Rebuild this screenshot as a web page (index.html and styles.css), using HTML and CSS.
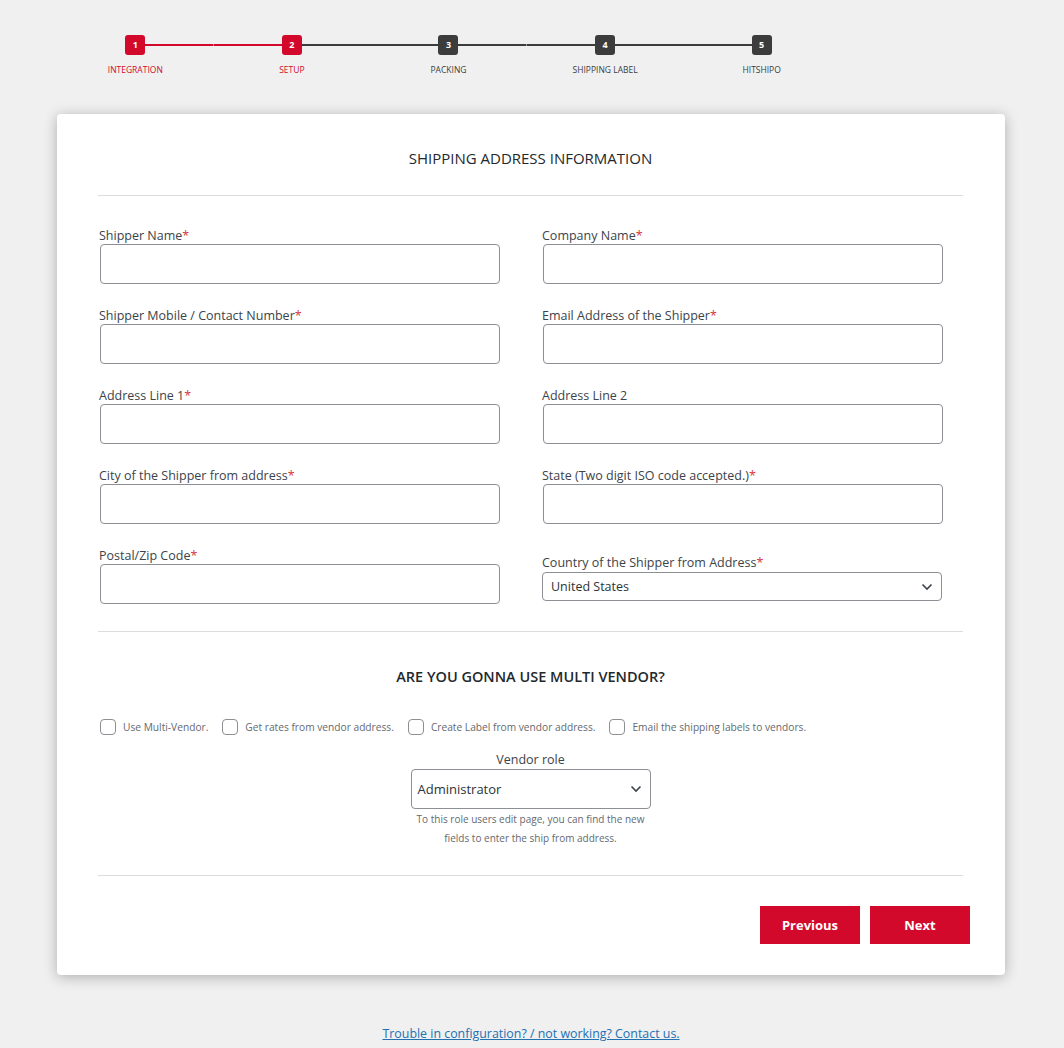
FILE: index.html
```html
<html>
<head>
    <meta name="viewport" content="width=device-width, initial-scale=1.0">
    <title>Shipping Setup</title>
    <link rel="stylesheet" href="styles.css">
</head>
<body>
<div class="page">
    <ul class="steps">
        <li class="step done first"><span class="num">1</span><span class="name">INTEGRATION</span></li>
        <li class="step active"><span class="num">2</span><span class="name">SETUP</span></li>
        <li class="step"><span class="num">3</span><span class="name">PACKING</span></li>
        <li class="step"><span class="num">4</span><span class="name">SHIPPING LABEL</span></li>
        <li class="step last"><span class="num">5</span><span class="name">HITSHIPO</span></li>
    </ul>

    <div class="card">
        <h3 class="title">SHIPPING ADDRESS INFORMATION</h3>
        <hr>
        <div class="form-grid">
            <div class="field">
                <label>Shipper Name<span class="req">*</span></label>
                <input type="text">
            </div>
            <div class="field">
                <label>Company Name<span class="req">*</span></label>
                <input type="text">
            </div>
            <div class="field">
                <label>Shipper Mobile / Contact Number<span class="req">*</span></label>
                <input type="text">
            </div>
            <div class="field">
                <label>Email Address of the Shipper<span class="req">*</span></label>
                <input type="text">
            </div>
            <div class="field">
                <label>Address Line 1<span class="req">*</span></label>
                <input type="text">
            </div>
            <div class="field">
                <label>Address Line 2</label>
                <input type="text">
            </div>
            <div class="field">
                <label>City of the Shipper from address<span class="req">*</span></label>
                <input type="text">
            </div>
            <div class="field">
                <label>State (Two digit ISO code accepted.)<span class="req">*</span></label>
                <input type="text">
            </div>
            <div class="field">
                <label>Postal/Zip Code<span class="req">*</span></label>
                <input type="text">
            </div>
            <div class="field country">
                <label>Country of the Shipper from Address<span class="req">*</span></label>
                <div class="select small">
                    <span>United States</span>
                    <svg width="12" height="8" viewBox="0 0 12 8"><path d="M1.5 1.5 L6 6 L10.5 1.5" fill="none" stroke="#3c434a" stroke-width="1.6"/></svg>
                </div>
            </div>
        </div>
        <hr>
        <h3 class="title bold">ARE YOU GONNA USE MULTI VENDOR?</h3>
        <div class="checks">
            <label class="check"><input type="checkbox">Use Multi-Vendor.</label>
            <label class="check"><input type="checkbox">Get rates from vendor address.</label>
            <label class="check"><input type="checkbox">Create Label from vendor address.</label>
            <label class="check"><input type="checkbox">Email the shipping labels to vendors.</label>
        </div>
        <div class="vendor">
            <div class="vendor-label">Vendor role</div>
            <div class="select big">
                <span>Administrator</span>
                <svg width="12" height="8" viewBox="0 0 12 8"><path d="M1.5 1.5 L6 6 L10.5 1.5" fill="none" stroke="#3c434a" stroke-width="1.6"/></svg>
            </div>
            <p class="help">To this role users edit page, you can find the new<br>fields to enter the ship from address.</p>
        </div>
        <hr>
        <div class="actions">
            <button class="btn">Previous</button>
            <button class="btn">Next</button>
        </div>
    </div>

    <div class="footer">
        <a href="#">Trouble in configuration? / not working? Contact us.</a>
    </div>
</div>
</body>
</html>
```

FILE: styles.css
```css
/* Page */
body {
    margin: 0;
    background: #f0f0f1;
    font-family: 'Open Sans', 'Noto Sans', sans-serif;
    color: #3c434a;
}
.page {
    width: 948px;
    margin: 0 0 0 57px;
    padding-top: 35px;
}

/* Stepper */
.steps {
    list-style: none;
    margin: 0;
    padding: 0;
    width: 783px;
    display: flex;
}
.step {
    flex: 1;
    display: flex;
    flex-direction: column;
    align-items: center;
    background-image: linear-gradient(#3c3c3c, #3c3c3c), linear-gradient(#3c3c3c, #3c3c3c);
    background-repeat: no-repeat;
    background-size: 50% 2px, 50% 2px;
    background-position: left 9px, right 9px;
}
.step.done {
    background-image: linear-gradient(#d3092b, #d3092b), linear-gradient(#d3092b, #d3092b);
}
.step.active {
    background-image: linear-gradient(#d3092b, #d3092b), linear-gradient(#3c3c3c, #3c3c3c);
}
.step.first {
    background-size: 0 2px, 50% 2px;
}
.step.last {
    background-size: 50% 2px, 0 2px;
}
.num {
    width: 20px;
    height: 20px;
    border-radius: 3px;
    background: #3c3c3c;
    color: #fff;
    font-size: 9px;
    font-weight: 700;
    line-height: 20px;
    text-align: center;
}
.done .num,
.active .num {
    background: #d3092b;
}
.name {
    margin-top: 9px;
    font-size: 8.5px;
    line-height: 12px;
    color: #3c3c3c;
}
.done .name,
.active .name {
    color: #d3092b;
}

/* Card */
.card {
    margin-top: 38px;
    background: #fff;
    border-radius: 4px;
    box-shadow: 0 2px 14px rgba(0, 0, 0, 0.28);
    padding: 34px 42px 31px 41px;
}
.title {
    margin: 0;
    text-align: center;
    font-size: 15px;
    line-height: 20px;
    font-weight: 400;
    color: #23282d;
}
.title.bold {
    font-size: 14.5px;
    font-weight: 600;
    margin-top: 35px;
}
hr {
    border: none;
    border-top: 1px solid #dcdcde;
    margin: 27px 0 0 0;
}

/* Form */
.form-grid {
    display: grid;
    grid-template-columns: 443px 1fr;
    row-gap: 24px;
    padding-top: 32px;
}
.field label {
    display: block;
    font-size: 12.5px;
    line-height: 16px;
    padding-left: 1px;
    color: #3c434a;
}
.req {
    color: #d63638;
}
.field input {
    display: block;
    width: 400px;
    height: 40px;
    margin-left: 2px;
    border: 1px solid #8c8f94;
    border-radius: 4px;
    background: #fff;
    box-sizing: border-box;
}
.field.country {
    padding-top: 7px;
}
.select {
    display: flex;
    align-items: center;
    justify-content: space-between;
    border: 1px solid #8c8f94;
    border-radius: 4px;
    background: #fff;
    box-sizing: border-box;
    color: #2c3338;
}
.select.small {
    width: 400px;
    height: 29px;
    margin-top: 1px;
    margin-left: 1px;
    padding: 0 8px;
    font-size: 12.5px;
}
.select.big {
    width: 240px;
    height: 40px;
    padding: 0 8px 0 6px;
    font-size: 13px;
}

/* Multi vendor */
.checks {
    display: flex;
    margin-top: 32px;
    padding-left: 2px;
    gap: 14px;
}
.check {
    display: flex;
    align-items: center;
    font-size: 10.2px;
    color: #646970;
}
.check input {
    appearance: none;
    -webkit-appearance: none;
    width: 16px;
    height: 16px;
    margin: 0 7px 0 0;
    border: 1px solid #8c8f94;
    border-radius: 4px;
    background: #fff;
}
.vendor {
    display: flex;
    flex-direction: column;
    align-items: center;
    margin-top: 17px;
}
.vendor-label {
    font-size: 12.5px;
    line-height: 16px;
    margin-bottom: 1px;
}
.help {
    margin: 1px 0 0;
    text-align: center;
    font-size: 10px;
    line-height: 19px;
    color: #646970;
}

/* Buttons */
.actions {
    display: flex;
    justify-content: flex-end;
    gap: 10px;
    margin-top: 30px;
    margin-right: -7px;
}
.btn {
    width: 100px;
    height: 38px;
    border: none;
    background: #d3092b;
    color: #fff;
    font-family: inherit;
    font-size: 13px;
    font-weight: 700;
    cursor: pointer;
}
.btn:hover {
    background: #b0061f;
}

/* Footer */
.footer {
    text-align: center;
    margin-top: 51px;
    line-height: 16px;
}
.footer a {
    font-size: 12.4px;
    color: #2271b1;
}
```
